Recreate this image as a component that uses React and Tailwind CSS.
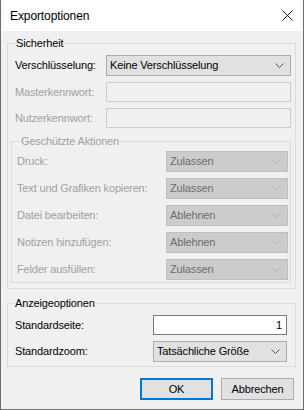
import React from "react";

const Chevron = ({ disabled }) => (
  <svg width="9" height="5" viewBox="0 0 9 5" className="shrink-0">
    <path
      d="M0.5 0.5 L4.5 4.5 L8.5 0.5"
      fill="none"
      stroke={disabled ? "#b4b4b4" : "#505050"}
      strokeWidth="1"
    />
  </svg>
);

const Select = ({ value, disabled, className = "" }) => (
  <div
    className={`flex h-[21px] items-center justify-between border pl-[3px] pr-[6px] ${
      disabled
        ? "border-[#bfbfbf] bg-[#cccccc] text-[#6d6d6d]"
        : "border-[#adadad] bg-[#e1e1e1] text-black"
    } ${className}`}
  >
    <span>{value}</span>
    <Chevron disabled={disabled} />
  </div>
);

const actions = [
  { label: "Druck:", value: "Zulassen" },
  { label: "Text und Grafiken kopieren:", value: "Zulassen" },
  { label: "Datei bearbeiten:", value: "Ablehnen" },
  { label: "Notizen hinzufügen:", value: "Ablehnen" },
  { label: "Felder ausfüllen:", value: "Zulassen" },
];

export default function App() {
  return (
    <div
      className="flex h-[410px] w-[304px] flex-col border-x border-b border-[#6d6d6d] bg-[#f0f0f0] text-[11px] tracking-[-0.15px] text-black"
      style={{ fontFamily: '"Liberation Sans", Arial, sans-serif' }}
    >
      {/* Title bar */}
      <div className="flex h-[31px] shrink-0 items-center justify-between bg-white pl-[9px] pr-[10px]">
        <span className="text-[12px] tracking-[-0.1px]">Exportoptionen</span>
        <svg width="11" height="11" viewBox="0 0 11 11">
          <path d="M0.5 0.5 L10.5 10.5 M10.5 0.5 L0.5 10.5" stroke="#111" strokeWidth="1" />
        </svg>
      </div>

      {/* Sicherheit */}
      <fieldset className="ml-[6px] mt-[5px] w-[289px] border border-[#dcdcdc] pb-[5px] pl-[3px] pr-[4px]">
        <legend className="ml-[4px] px-[1px] leading-[15px]">Sicherheit</legend>

        <div className="mt-[4px] flex h-[21px] items-center pl-[4px]">
          <span>Verschlüsselung:</span>
          <Select value="Keine Verschlüsselung" className="ml-auto w-[185px]" />
        </div>
        <div className="mt-[6px] flex h-[20px] items-center pl-[4px] text-[#a0a0a0]">
          <span>Masterkennwort:</span>
          <div className="ml-auto h-[20px] w-[185px] border border-[#cccccc] bg-[#f0f0f0]" />
        </div>
        <div className="mt-[6px] flex h-[20px] items-center pl-[4px] text-[#a0a0a0]">
          <span>Nutzerkennwort:</span>
          <div className="ml-auto h-[20px] w-[185px] border border-[#cccccc] bg-[#f0f0f0]" />
        </div>

        {/* Geschützte Aktionen */}
        <fieldset className="mt-[6px] w-[280px] border border-[#dcdcdc] pb-[2px] pl-[5px] pr-[2px] text-[#a0a0a0]">
          <legend className="ml-[3px] px-[1px] leading-[15px]">Geschützte Aktionen</legend>
          {actions.map((a, i) => (
            <div
              key={a.label}
              className={`flex h-[21px] items-center ${i === 0 ? "mt-[2px]" : "mt-[6px]"}`}
            >
              <span>{a.label}</span>
              <Select value={a.value} disabled className="ml-auto w-[122px]" />
            </div>
          ))}
        </fieldset>
      </fieldset>

      {/* Anzeigeoptionen */}
      <fieldset className="ml-[6px] mt-[7px] w-[289px] border border-[#dcdcdc] pb-[4px] pl-[7px] pr-[8px]">
        <legend className="-ml-[1px] px-[1px] leading-[15px]">Anzeigeoptionen</legend>
        <div className="mt-[4px] flex h-[20px] items-center">
          <span>Standardseite:</span>
          <div className="ml-auto flex h-[20px] w-[134px] items-center justify-end border border-[#7a7a7a] bg-white pr-[4px]">
            1
          </div>
        </div>
        <div className="mt-[6px] flex h-[21px] items-center">
          <span>Standardzoom:</span>
          <Select value="Tatsächliche Größe" className="ml-auto w-[134px]" />
        </div>
      </fieldset>

      {/* Buttons */}
      <div className="mt-[11px] flex justify-end gap-[8px] pr-[9px]">
        <button className="h-[22px] w-[73px] border-2 border-[#0078d7] bg-[#e1e1e1] tracking-[-0.15px]">
          OK
        </button>
        <button className="h-[22px] w-[73px] border border-[#adadad] bg-[#e1e1e1] tracking-[-0.15px]">
          Abbrechen
        </button>
      </div>
    </div>
  );
}
